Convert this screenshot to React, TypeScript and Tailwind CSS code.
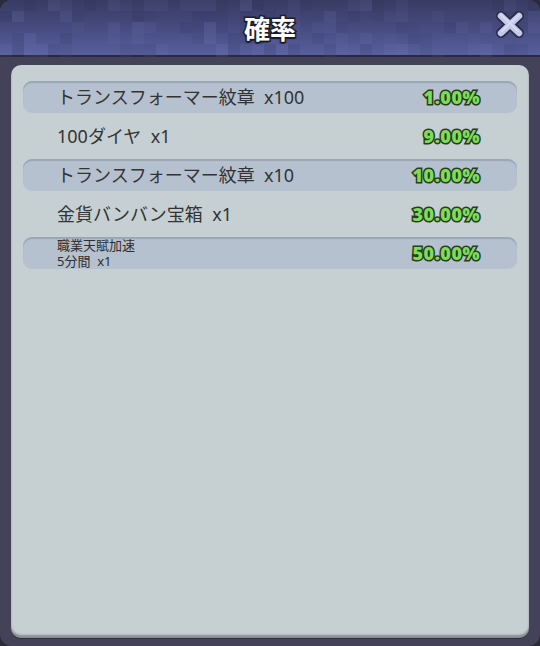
const rows = [
  { name: "トランスフォーマー紋章  x100", pct: "1.00%", shaded: true },
  { name: "100ダイヤ  x1", pct: "9.00%", shaded: false },
  { name: "トランスフォーマー紋章  x10", pct: "10.00%", shaded: true },
  { name: "金貨バンバン宝箱  x1", pct: "30.00%", shaded: false },
  { name: ["職業天賦加速", "5分間  x1"], pct: "50.00%", shaded: true },
];

// pixel camo blocks for the header texture
function blocks() {
  const out: { x: number; y: number; o: number; light: boolean }[] = [];
  let seed = 7;
  const rnd = () => {
    seed = (seed * 9301 + 49297) % 233280;
    return seed / 233280;
  };
  for (let y = 0; y < 57; y += 11) {
    for (let x = 0; x < 540; x += 12) {
      const r = rnd();
      if (r < 0.45) out.push({ x, y, o: 0.05 + rnd() * 0.08, light: rnd() > 0.45 });
    }
  }
  return out;
}

function Header() {
  return (
    <div className="relative h-[57px] border-b-2 border-[#2b2a3d] bg-gradient-to-b from-[#383b62] via-[#464b80] to-[#585f9e]">
      <svg className="absolute inset-0" width="540" height="57" aria-hidden>
        {blocks().map((b, i) => (
          <rect
            key={i}
            x={b.x}
            y={b.y}
            width="12"
            height="11"
            fill={b.light ? "#8890d0" : "#20223f"}
            opacity={b.o}
          />
        ))}
      </svg>
      <div className="relative flex h-full items-center justify-center">
        <span className="text-[26px] font-bold text-white [font-family:'Noto_Sans_CJK_JP',sans-serif] [-webkit-text-stroke:3px_#1e1e2c] [paint-order:stroke_fill] [text-shadow:0_2px_1px_#1a1a26]">
          確率
        </span>
      </div>
      <svg className="absolute left-[495px] top-[11px]" width="30" height="27" viewBox="0 0 30 27" aria-hidden>
        <path d="M6 5 L24 22 M24 5 L6 22" stroke="#2e2d45" strokeWidth="10" strokeLinecap="round" />
        <path d="M6 5 L24 22 M24 5 L6 22" stroke="#c5c9ec" strokeWidth="6.5" strokeLinecap="round" />
        <path d="M6 4 L23 20 M24 4 L7 20" stroke="#e4e6fa" strokeWidth="2" strokeLinecap="round" opacity="0.6" />
      </svg>
    </div>
  );
}

export default function App() {
  return (
    <div className="h-[646px] w-[540px] bg-[#2c2b3c] [font-family:'Noto_Sans','Noto_Sans_CJK_JP',sans-serif]">
      <div className="flex h-full flex-col overflow-hidden rounded-[12px] bg-[#434259]">
        <Header />
        <div className="flex-1 px-[11px] pt-[8px] pb-[8px]">
          <div className="h-full rounded-[10px] bg-[#c6d0d3] px-[12px] pt-[16px] shadow-[inset_0_-3px_2px_rgba(60,64,70,0.45),0_1px_0_#2f2e40]">
            <div className="flex flex-col gap-[7px]">
              {rows.map((row, i) => (
                <div
                  key={i}
                  className={`flex h-[32px] items-center justify-between rounded-[9px] pl-[34px] pr-[37px] ${
                    row.shaded
                      ? "bg-[#b6c1cf] shadow-[inset_0_2px_1px_rgba(120,130,150,0.45)]"
                      : ""
                  }`}
                >
                  {Array.isArray(row.name) ? (
                    <div className="flex flex-col text-[13px] leading-[16px] text-[#2e2e2e]">
                      <span className="whitespace-pre">{row.name[0]}</span>
                      <span className="whitespace-pre">{row.name[1]}</span>
                    </div>
                  ) : (
                    <span className="whitespace-pre text-[18px] text-[#333333]">{row.name}</span>
                  )}
                  <span className="text-[18px] font-extrabold tracking-[0.5px] text-[#7ddd58] [font-family:'Open_Sans',sans-serif] [-webkit-text-stroke:3px_#2b3a1e] [paint-order:stroke_fill]">
                    {row.pct}
                  </span>
                </div>
              ))}
            </div>
          </div>
        </div>
      </div>
    </div>
  );
}
